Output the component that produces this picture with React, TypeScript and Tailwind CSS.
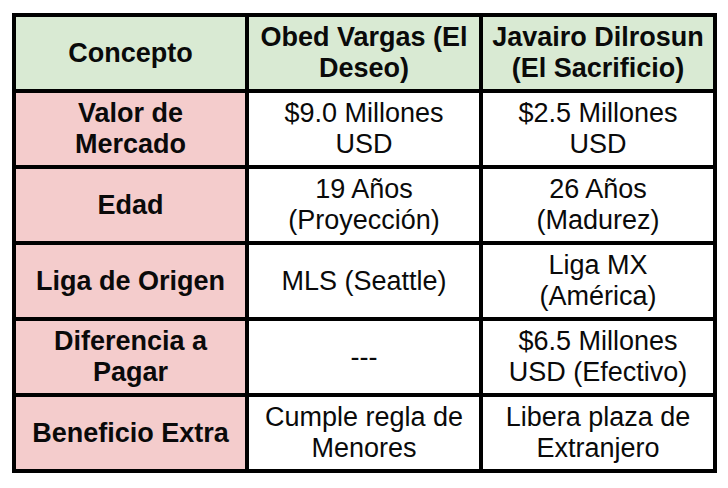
const HEADERS = ['Concepto', 'Obed Vargas (El Deseo)', 'Javairo Dilrosun (El Sacrificio)'];

const ROWS: [string, string, string][] = [
  ['Valor de Mercado', '$9.0 Millones USD', '$2.5 Millones USD'],
  ['Edad', '19 Años (Proyección)', '26 Años (Madurez)'],
  ['Liga de Origen', 'MLS (Seattle)', 'Liga MX (América)'],
  ['Diferencia a Pagar', '---', '$6.5 Millones USD (Efectivo)'],
  ['Beneficio Extra', 'Cumple regla de Menores', 'Libera plaza de Extranjero'],
];

const cell = 'flex items-center justify-center text-center px-2 h-[72px] text-[27px] leading-[31px] text-[#0a0a0a]';

export default function App() {
  return (
    <div className="min-h-[488px] bg-white pt-[13px] pl-[12px]" style={{ fontFamily: '"Liberation Sans", Arial, sans-serif' }}>
      <div className="inline-grid grid-cols-[229px_230px_230px] gap-[4px] p-[4px] bg-black">
        {HEADERS.map(h => (
          <div key={h} className={`${cell} bg-[#d9ead3] font-bold`}>{h}</div>
        ))}
        {ROWS.map(([label, a, b]) => (
          <div key={label} className="contents">
            <div className={`${cell} bg-[#f4cccc] font-bold`}>{label}</div>
            <div className={`${cell} bg-white`}>{a}</div>
            <div className={`${cell} bg-white`}>{b}</div>
          </div>
        ))}
      </div>
    </div>
  );
}
